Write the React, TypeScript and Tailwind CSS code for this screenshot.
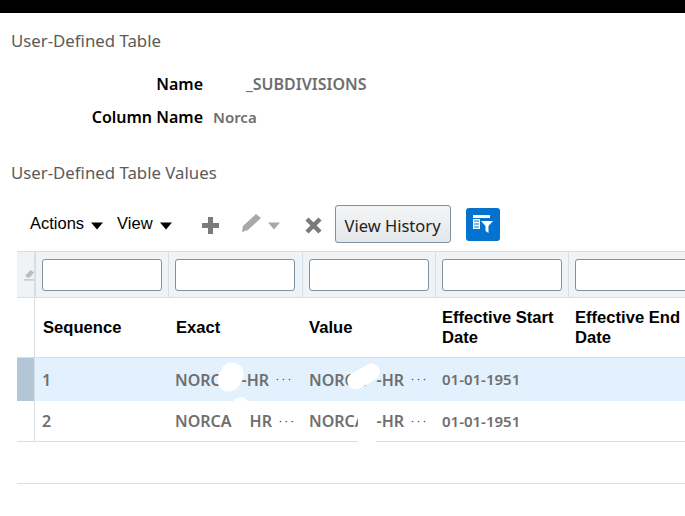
const arial = "font-['Liberation_Sans',Arial,sans-serif]";
const segoe = "font-['Noto_Sans','Open_Sans',sans-serif]";
const cols = "grid grid-cols-[18px_133px_134px_133px_133px_133px]";

function Caret({ className }: { className: string }) {
  return (
    <svg width="12" height="8" viewBox="0 0 12 8" className={className}>
      <path d="M0 0.5h12L6 7.5z" fill="currentColor" />
    </svg>
  );
}

function FilterCell() {
  return (
    <div className="border-l border-[#d6dfe6] px-[6px] pt-[7px] pb-[6px] first:border-l-0">
      <div className="h-[32px] w-[120px] rounded-[3px] border border-[#7f929f] bg-white" />
    </div>
  );
}

function Code({ gap, suffix }: { gap: string; suffix: string }) {
  return (
    <div className="relative flex items-center pl-[7px] whitespace-nowrap text-[16px] font-semibold text-[#6f6f6f]">
      NORCA
      <span className={gap} />
      {suffix}
      <span className="ml-[7px] text-[11px] font-normal tracking-[3px] text-[#444]">···</span>
    </div>
  );
}

function Row({ n, selected, exactGap, exactSuffix, valueGap }: {
  n: string; selected?: boolean; exactGap: string; exactSuffix: string; valueGap: string;
}) {
  return (
    <div className={`${cols} ${selected ? "h-[43px] bg-[#e3f0fd]" : "h-[40px] bg-white"}`}>
      <div className={`border-r border-[#d6dfe6] ${selected ? "bg-[#b3c6d7]" : ""}`} />
      <div className="flex items-center pl-[7px] text-[16px] text-[#6f6f6f]">{n}</div>
      <Code gap={exactGap} suffix={exactSuffix} />
      <Code gap={valueGap} suffix="-HR" />
      <div className="flex items-center pl-[7px] text-[#6f6f6f]">01-01-1951</div>
      <div />
    </div>
  );
}

export default function App() {
  return (
    <div className={`relative h-[516px] w-[685px] overflow-hidden bg-white ${segoe}`}>
      <div className="h-[13px] bg-black" />

      <h2 className="mt-[16px] ml-[11px] h-[24px] text-[16.8px] leading-[24px] font-normal text-[#5b5b5b]">
        User-Defined Table
      </h2>

      <div className="mt-[20px] grid grid-cols-[203px_1fr] gap-x-[10px] gap-y-[11px] text-[16px] leading-[22px] font-semibold">
        <div className="text-right text-black">Name</div>
        <div className="text-[#6e6e6e]">
          <span className="ml-[33px]">_SUBDIVISIONS</span>
        </div>
        <div className="text-right text-black">Column Name</div>
        <div className="text-[15px] text-[#6e6e6e]">Norca</div>
      </div>

      <h2 className="mt-[33px] ml-[11px] h-[24px] text-[16.8px] leading-[24px] font-normal text-[#5b5b5b]">
        User-Defined Table Values
      </h2>

      {/* Toolbar */}
      <div className="mt-[20px] flex h-[38px] items-center pl-[30px]">
        <span className={`${arial} mb-[2px] text-[16.5px] text-black`}>Actions</span>
        <Caret className="mt-[3px] ml-[7px] text-black" />
        <span className={`${arial} mb-[2px] ml-[14px] text-[16.5px] text-black`}>View</span>
        <Caret className="mt-[3px] ml-[7px] text-black" />
        <svg width="17" height="17" viewBox="0 0 17 17" className="mt-[3px] ml-[30px]">
          <path d="M6 0h5v6h6v5h-6v6H6v-6H0V6h6z" fill="#7b7b7b" />
        </svg>
        <svg width="21" height="20" viewBox="0 0 21 20" className="mb-[3px] ml-[22px]">
          <path d="M15 1l5 4L7 17l-6 2 1-6z" fill="#a8a8a8" />
        </svg>
        <Caret className="mt-[3px] ml-[6px] text-[#a8a8a8]" />
        <svg width="17" height="17" viewBox="0 0 17 17" className="mt-[3px] ml-[25px]">
          <path d="M2 2l13 13M15 2L2 15" stroke="#7b7b7b" strokeWidth="4.500" />
        </svg>
        <button className="ml-[13px] h-[38px] w-[116px] rounded-[3px] border border-[#7f929f] bg-gradient-to-b from-[#f4f5f6] to-[#e4e7ea] pt-[4px] text-[16.5px] text-[#222]">
          View History
        </button>
        <div className="ml-[15px] flex h-[33px] w-[34px] items-center justify-center rounded-[3px] bg-[#0572ce]">
          <svg width="22" height="18" viewBox="0 0 22 18">
            <path d="M1 0h17v3H1z" fill="#fff" />
            <path d="M1 4h7v10H1z" fill="#fff" />
            <path d="M2 6h5M2 9h5M2 12h5" stroke="#0572ce" strokeWidth="1" />
            <path d="M9 6h12l-4.500 5v7l-3-2v-5z" fill="#fff" />
          </svg>
        </div>
      </div>

      {/* Table */}
      <div className={`${arial} mt-[8px] ml-[17px] w-[720px] text-[16px]`}>
        <div className={`${cols} h-[47px] border-y border-[#d6dfe6] bg-[#f0f3f6]`}>
          <div className="flex items-center border-r border-[#d6dfe6] pl-[7px]">
            <svg width="12" height="15" viewBox="0 0 12 15">
              <path d="M2 8l6-6 4 3-5 6H3z" fill="#b8bec4" />
              <path d="M0 14h12" stroke="#b8bec4" strokeWidth="1.500" />
            </svg>
          </div>
          <FilterCell />
          <FilterCell />
          <FilterCell />
          <FilterCell />
          <FilterCell />
        </div>

        <div className={`${cols} h-[60px] border-b border-[#d6dfe6] text-[16.6px] font-bold text-black`}>
          <div className="border-r border-[#d6dfe6]" />
          <div className="flex items-center pt-[2px] pl-[8px]">Sequence</div>
          <div className="flex items-center pt-[2px] pl-[8px]">Exact</div>
          <div className="flex items-center pt-[2px] pl-[7px]">Value</div>
          <div className="flex items-center pl-[7px] leading-[20px]">Effective Start Date</div>
          <div className="flex items-center pl-[7px] leading-[20px]">Effective End Date</div>
        </div>

        <div className={`${segoe} text-[15px] font-semibold`}>
          <Row n="1" selected exactGap="w-[10px]" exactSuffix="-HR" valueGap="w-[11px]" />
          <Row n="2" exactGap="w-[18px]" exactSuffix="HR" valueGap="w-[11px]" />
        </div>
        <div className="h-[43px] border-y border-[#d6dfe6]" />
      </div>

      {/* Redaction marks painted over the screenshot */}
      <div className="absolute top-[362px] left-[219px] h-[30px] w-[23px] rotate-[30deg] rounded-full bg-white" />
      <div className="absolute top-[368px] left-[346px] h-[17px] w-[35px] -rotate-[30deg] rounded-full bg-white" />
      <div className="absolute top-[397px] left-[232px] h-[36px] w-[17px] rounded-t-full bg-white" />
      <div className="absolute top-[411px] left-[358px] h-[36px] w-[18px] bg-white" />
    </div>
  );
}
